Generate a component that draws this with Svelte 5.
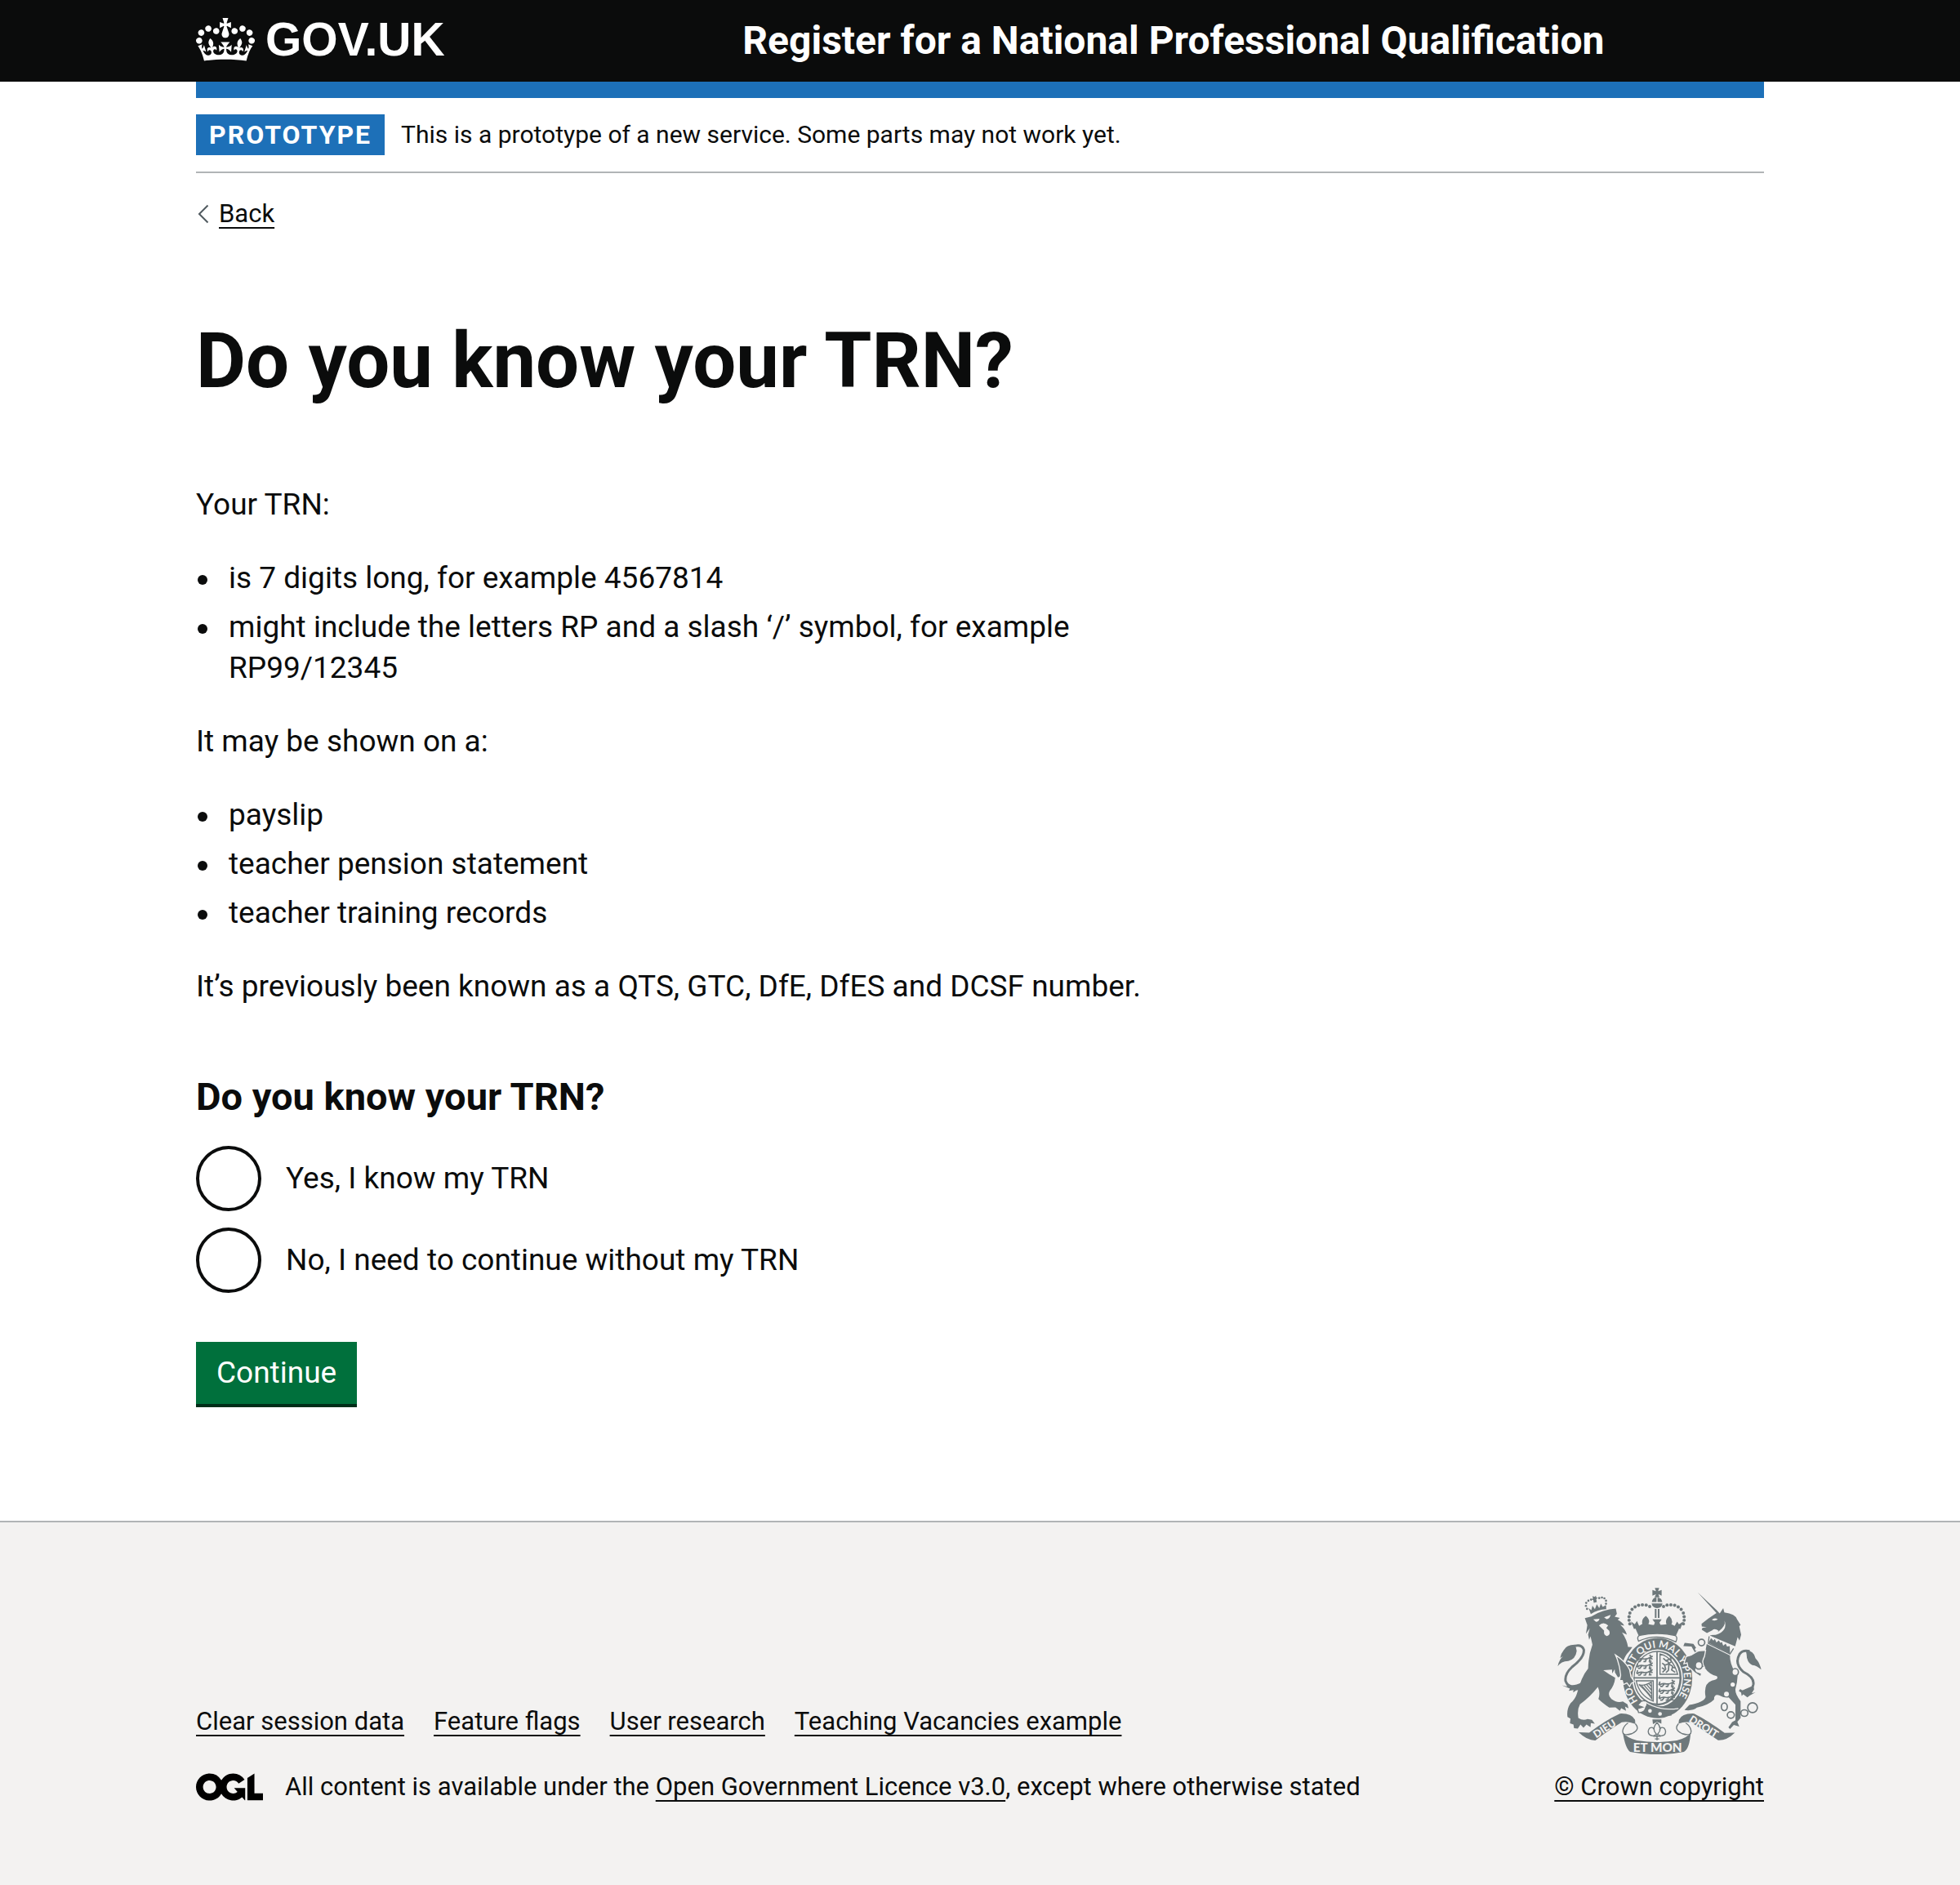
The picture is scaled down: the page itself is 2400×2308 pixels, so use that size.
<script>
  const trnFormats = [
    'is 7 digits long, for example 4567814',
    'might include the letters RP and a slash ‘/’ symbol, for example RP99/12345'
  ];
  const trnSources = ['payslip', 'teacher pension statement', 'teacher training records'];
  const choices = [
    { value: 'yes', label: 'Yes, I know my TRN' },
    { value: 'no', label: 'No, I need to continue without my TRN' }
  ];
  const footerLinks = ['Clear session data', 'Feature flags', 'User research', 'Teaching Vacancies example'];

  let answer = $state('');

  // Pearls along the arches of the imperial crown above the garter
  const pearls = [
    [338, 203], [335, 190], [335, 177], [338, 163], [346, 150], [357, 141], [370, 135], [384, 133], [398, 134], [411, 139],
    [462, 139], [475, 134], [489, 133], [503, 135], [516, 141], [527, 150], [535, 163], [538, 177], [538, 190], [535, 203]
  ];
  const lionPearls = [
    [180, 148], [176, 137], [177, 126], [185, 118], [195, 114], [225, 108], [235, 106], [244, 109], [250, 118], [250, 129]
  ];
  // Tops of the three lions passant in each English quarter
  const lionRows = [322, 347, 372];
</script>

<header class="header">
  <div class="container header-row">
    <a class="logo" href="#home">
      <svg class="crown" viewBox="0 0 132 97" aria-hidden="true">
        <path d="M25 30.2c3.5 1.5 7.7-.2 9.1-3.7 1.5-3.6-.2-7.8-3.9-9.2-3.6-1.4-7.6.3-9.1 3.9-1.4 3.5.3 7.5 3.9 9zM9 39.5c3.6 1.5 7.8-.2 9.2-3.7 1.5-3.6-.2-7.8-3.9-9.1-3.6-1.5-7.6.2-9.1 3.8-1.4 3.5.3 7.5 3.8 9zM4.4 57.2c3.5 1.5 7.7-.2 9.1-3.8 1.5-3.6-.2-7.7-3.9-9.1-3.5-1.5-7.6.3-9.1 3.8-1.4 3.5.3 7.6 3.9 9.1zm38.3-21.4c3.5 1.5 7.7-.2 9.1-3.8 1.5-3.6-.2-7.7-3.9-9.1-3.6-1.5-7.6.3-9.1 3.8-1.3 3.6.4 7.7 3.9 9.1zm64.4-5.6c-3.6 1.5-7.8-.2-9.1-3.7-1.5-3.6.2-7.8 3.8-9.2 3.6-1.4 7.7.3 9.2 3.9 1.3 3.5-.4 7.5-3.9 9zm15.9 9.3c-3.6 1.5-7.7-.2-9.1-3.7-1.5-3.6.2-7.8 3.7-9.1 3.6-1.5 7.7.2 9.2 3.8 1.5 3.5-.3 7.5-3.8 9zm4.7 17.7c-3.6 1.5-7.8-.2-9.2-3.8-1.5-3.6.2-7.7 3.9-9.1 3.6-1.5 7.7.3 9.2 3.8 1.3 3.5-.4 7.6-3.9 9.1zM89.3 35.8c-3.6 1.5-7.8-.2-9.2-3.8-1.4-3.6.2-7.7 3.9-9.1 3.6-1.5 7.7.3 9.2 3.8 1.4 3.6-.3 7.7-3.9 9.1zM69.7 17.7l8.9 4.7V9.3l-8.9 2.8c-.2-.3-.5-.6-.9-.9L72.4 0H59.6l3.5 11.2c-.3.3-.6.5-.9.9l-8.8-2.8v13.1l8.8-4.7c.3.3.6.7.9.9l-5 15.4v.1c-.2.8-.4 1.6-.4 2.4 0 4.1 3.1 7.5 7 8.1h.2c.3 0 .7.1 1 .1.4 0 .7 0 1-.1h.2c4-.6 7.1-4.1 7.1-8.1 0-.8-.1-1.7-.4-2.4V34l-5.1-15.4c.4-.2.7-.6 1-.9zM66 92.8c16.9 0 32.8 1.1 47.1 3.2 4-16.9 8.9-26.7 14-33.5l-9.6-3.4c1 4.9 1.1 7.2 0 10.2-1.5-1.4-3-4.3-4.2-8.7L108.6 76c2.8-2 5-3.2 7.5-3.3-4.4 9.4-10 11.9-13.6 11.2-4.3-.8-6.3-4.6-5.6-7.9 1-4.7 5.7-5.9 8-.5 4.3-8.7-3-11.4-7.6-8.8 7.1-7.2 7.9-13.5 2.1-21.1-8 6.1-8.1 12.3-4.5 20.8-4.7-5.4-12.1-2.5-9.5 6.2 3.4-5.2 7.9-2 7.2 3.1-.6 4.3-6.4 7.8-13.5 7.2-10.3-.9-10.9-8-11.2-13.8 2.5-.5 7.1 1.8 11 7.3L80.2 60c-4.1 4.4-8 5.3-12.3 5.4 1.4-4.4 8-11.6 8-11.6H55.5s6.4 7.2 7.9 11.6c-4.2-.1-8-1-12.3-5.4l1.4 16.4c3.9-5.5 8.5-7.7 10.9-7.3-.3 5.8-.9 12.8-11.1 13.8-7.2.6-12.9-2.9-13.5-7.2-.7-5 3.8-8.3 7.1-3.1 2.7-8.7-4.6-11.6-9.4-6.2 3.7-8.5 3.6-14.7-4.6-20.8-5.8 7.6-5 13.9 2.2 21.1-4.7-2.6-11.9.1-7.7 8.8 2.3-5.5 7.1-4.2 8.1.5.7 3.3-1.3 7.1-5.7 7.9-3.5.7-9-1.8-13.5-11.2 2.5.1 4.7 1.3 7.5 3.3l-4.7-15.4c-1.2 4.4-2.7 7.2-4.3 8.7-1.1-3-.9-5.3 0-10.2l-9.5 3.4c5 6.9 9.9 16.7 14 33.5 14.8-2.1 30.8-3.2 47.7-3.2z" />
      </svg>
      <span>GOV.UK</span>
    </a>
    <a class="service" href="#service">Register for a National Professional Qualification</a>
  </div>
</header>

<div class="container content">
  <div class="phase">
    <strong class="tag">PROTOTYPE</strong>
    <span>This is a prototype of a new service. Some parts may not work yet.</span>
  </div>

  <a class="back" href="#back">
    <svg viewBox="0 0 14 24" aria-hidden="true"><path d="M12.500 1.500 2 12l10.500 10.500" /></svg>
    <span>Back</span>
  </a>

  <main>
    <h1>Do you know your TRN?</h1>

    <p>Your TRN:</p>
    <ul class="bullets">
      {#each trnFormats as item}
        <li>{item}</li>
      {/each}
    </ul>

    <p>It may be shown on a:</p>
    <ul class="bullets">
      {#each trnSources as item}
        <li>{item}</li>
      {/each}
    </ul>

    <p>It’s previously been known as a QTS, GTC, DfE, DfES and DCSF number.</p>

    <form onsubmit={(event) => event.preventDefault()}>
      <fieldset>
        <legend>Do you know your TRN?</legend>
        <div class="radios">
          {#each choices as choice}
            <div class="radio">
              <input type="radio" id={choice.value} name="know-trn" value={choice.value} bind:group={answer} />
              <label for={choice.value}>{choice.label}</label>
            </div>
          {/each}
        </div>
      </fieldset>
      <button type="submit">Continue</button>
    </form>
  </main>
</div>

<footer>
  <div class="container footer-row">
    <div class="footer-main">
      <ul class="footer-links">
        {#each footerLinks as link}
          <li><a href="#footer">{link}</a></li>
        {/each}
      </ul>
      <div class="licence">
        <svg class="ogl" viewBox="0 0 483.200 195.700" aria-hidden="true">
          <path d="M421.5 142.8V.1l-50.7 32.3v161.1h112.4v-50.7zm-122.3-9.6A47.12 47.12 0 0 1 221 97.8c0-26 21.1-47.1 47.1-47.1 16.7 0 31.4 8.7 39.7 21.8l42.7-27.2A97.63 97.63 0 0 0 268.1 0c-36.5 0-68.3 20.1-85.1 49.7A98 98 0 0 0 97.8 0C43.9 0 0 43.9 0 97.8s43.9 97.8 97.8 97.8c36.5 0 68.3-20.1 85.1-49.7a97.76 97.76 0 0 0 149.6 25.4l19.4 22.2h3v-87.8h-80l24.3 27.5zM97.8 145c-26 0-47.1-21.1-47.1-47.1s21.1-47.1 47.1-47.1 47.1 21.1 47.1 47.1S123.8 145 97.8 145" />
        </svg>
        <span>All content is available under the <a href="#licence">Open Government Licence v3.0</a>, except where otherwise stated</span>
      </div>
    </div>

    <a class="copyright" href="#copyright">
      <svg class="crest" viewBox="72 70 750 614" aria-hidden="true">
        <!-- lion -->
        <path d="M172 182 196 176 Q238 150 286 147 L290 166 282 177 301 181 293 188 Q310 196 317 210 L303 207 Q322 224 327 243 L309 235 Q327 262 331 288 L347 289 334 306 Q321 318 313 342 L285 318 Q312 354 330 374 L305 396 294 400 283 382 282 370 273 386 272 372 240 374 Q262 390 284 402 Q281 430 264 450 Q255 466 270 480 Q290 496 312 489 L329 500 333 515 320 508 324 524 306 514 301 524 285 511 262 512 Q236 494 222 480 Q230 458 220 436 Q190 474 154 500 Q143 520 148 550 Q165 562 182 554 L198 557 209 571 194 569 193 584 178 574 167 586 156 574 146 589 132 588 130 574 117 570 119 552 108 546 Q104 519 119 496 Q136 482 143 460 Q159 398 184 368 Q185 320 200 280 L193 249 188 262 184 243 190 220 176 240 181 208 Z" />
        <path class="paper" d="M203 187 226 184 Q224 194 213 196ZM243 179 267 170 Q264 184 252 186ZM224 209 Q240 193 258 209 L251 218 262 229 Q268 245 253 248 Q240 245 243 228Z" />
        <path d="M194 167 186 145 196 153 200 136 209 149 216 131 225 145 231 129 238 141 250 134 251 149 Q219 150 194 167Z" />
        <path d="M200 101 208 104 213 99 214 106 220 106 214 112 216 123 205 126 203 115 197 114 202 109Z" />
        {#each lionPearls as [x, y]}
          <circle cx={x} cy={y} r="4" />
        {/each}
        <path class="tail" d="M161 424 Q113 447 101 414 Q97 388 125 362 Q172 326 168 298 Q161 279 137 284" />
        <path d="M137 280 Q105 279 94 300 Q84 312 81 329 L91 323 Q75 339 72 360 Q84 341 111 340 Q138 333 142 303ZM87 430 107 434 103 426 Q130 440 157 430 L151 446 Q140 446 129 456 L130 447 113 450 117 442Z" />

        <!-- garter and shield -->
        <ellipse cx="440" cy="403" rx="128" ry="148" />
        <ellipse class="ring" cx="440" cy="403" rx="91" ry="103" />
        <path id="garter" class="guide" d="M368 488 A97 112 0 0 1 343 403 A97 112 0 0 1 537 403 A97 112 0 0 1 440 515" />
        <text class="motto"><textPath href="#garter">HO<tspan dx="30">SOIT QUI MAL Y PENSE</tspan></textPath></text>
        <ellipse class="paper" cx="438" cy="402" rx="83" ry="95" />
        <path class="cross" d="M438 305V500M351 402H525" />
        {#each [0, 1] as quarter}
          <g transform={quarter ? 'translate(82 92)' : undefined}>
            {#each lionRows as y}
              <path class="beast" transform="translate(0 {y})" d="M362 14q5-6 4-12m-2 14q10-9 22-6t23-3l13-7m-9 4 8 8m-8-5-3 12h8m-18-11-5 12h-7m-5-10-8 10h-7m48-20-6-4" />
            {/each}
          </g>
        {/each}
        <path class="thin" d="M449 314 Q496 325 514 389 L449 389ZM361 413 424 413 424 488 Q374 470 361 413Z" />
        <path class="beast" d="M458 382 470 370 466 356 482 350 475 337 488 332 491 343 480 350 496 360 492 373 505 382M468 356 457 348M474 342 461 330M456 365 465 370M482 352 480 374 471 383M494 362 506 366M486 323 491 331" />
        <path class="thin" d="M371 427 Q388 434 417 418 L419 480 Q402 454 371 427M382 432 416 470M391 430 417 460M400 427 417 447M408 424 418 435" />
        <path class="strap" d="M388 500 Q430 530 490 524" />
        <circle class="paper" cx="412" cy="524" r="7" />
        <circle class="paper" cx="449" cy="535" r="7" />
        <path class="buckle" d="M372 497 Q381 483 395 488 Q407 496 397 510 Q392 532 370 530 L366 516 385 510 367 504Z" />
        <path class="paper-line" d="M393 490 Q446 526 517 515" />
        <!-- lion's raised arm -->
        <path class="arm" d="M285 318 Q322 342 337 372 L342 398 354 416 343 423 337 434 327 421 314 427 310 412 300 412 304 392 Q300 350 285 318Z" />

        <!-- imperial crown -->
        <path d="M359 221 Q382 207 437 207 Q492 207 519 221 L507 248 Q438 231 371 248Z" />
        <path d="M342 194 356 205 364 193 372 211 384 203 Q379 187 397 174 Q415 190 406 204 L426 209 430 199 421 187H455L447 199 451 208 473 205 Q466 188 483 174 Q499 190 491 205 L503 211 512 195 519 205 534 195 524 222 Q438 203 353 222Z" />
        {#each pearls as [x, y]}
          <circle cx={x} cy={y} r="6" />
        {/each}
        <path d="M418 128H458Q456 145 438 145Q421 144 418 128ZM430 148H436V181H430ZM441 148H447V181H441ZM419 124Q421 105 437 106Q456 106 457 124ZM430 71H446L442 83 455 78V99L443 94 447 105H429L434 94 421 99V78L434 83Z" />
        <path class="paper-line" d="M438 106V123M419 125H457" />
        <path class="cap" d="M370 267 Q362 251 374 246 Q438 232 505 246 Q516 252 507 270 Q440 235 370 267Z" />

        <!-- unicorn -->
        <path d="M588 87 658 153 669 165 682 145 686 161 Q727 166 733 187 L746 207 741 212 748 243 742 265 735 252 726 286 632 246 Q657 244 665 229 Q651 218 641 227 L622 237 603 225 605 218 621 215 603 213 602 203 626 184 657 163Z" />
        <path class="paper" d="M640 188 Q651 178 662 187 Q650 194 640 188ZM665 231 Q692 211 687 191 Q700 229 654 244 L641 244Z" />
        <path class="paper" d="M629 244 Q676 275 725 291 L708 321 622 279Z" />
        <path class="thin" d="M630 249 627 275 707 314 720 294" />
        <path d="M628 273 637 256 646 265 651 259 657 272 666 264 671 273 677 270 682 284 691 276 696 287 706 285 707 314Z" />
        <path d="M621 278 707 320 Q706 357 735 394 Q734 420 727 443 Q725 462 746 488 L746 550 734 564 741 582 721 576 707 591 701 585 715 565 727 558 727 501 702 474 Q687 477 669 467 Q648 460 648 482 Q630 501 585 512 Q570 525 539 521 L557 502 Q611 492 617 473 Q608 423 640 412 Q668 408 658 396 Q630 389 613 364 L587 364 Q576 370 584 379 L602 386 599 398 579 385 563 370 566 340 600 339 613 323 588 319 578 309 565 287 535 285 540 273 572 277 589 302 617 301Z" />
        <path class="arm" d="M617 301 Q588 300 579 309 Q565 320 545 324 L537 350 549 347 552 362 563 370 579 385 599 398 602 386 584 379 Q576 370 587 364 L613 364 Q600 345 613 323Z" />
        <path class="tail" d="M742 447 Q783 476 793 426 Q797 400 756 380 Q722 350 742 315 Q753 298 779 304" />
        <path d="M765 300 Q795 301 801 330 Q816 345 822 372 Q807 357 789 355 Q768 345 768 315ZM792 431 796 444 787 459 801 455 780 467 771 474 756 463 750 469 747 451Z" />
        <g class="chain">
          <ellipse cx="602" cy="272" rx="12" ry="12" />
          <ellipse cx="592" cy="356" rx="13" ry="14" />
          <ellipse cx="726" cy="381" rx="12" ry="13" />
          <ellipse cx="686" cy="509" rx="11" ry="14" />
          <ellipse cx="710" cy="539" rx="13" ry="12" />
          <ellipse cx="760" cy="532" rx="13" ry="12" />
          <circle cx="790" cy="512" r="18" />
        </g>
        <circle class="paper" cx="717" cy="427" r="8" />
        <circle class="paper" cx="694" cy="462" r="9" />
        <circle class="paper" cx="584" cy="297" r="6" />

        <!-- ribbon -->
        <path d="M149 603 188 604 Q250 557 301 534 Q344 532 357 557 L358 572 Q329 560 308 566 Q252 600 211 633 Q181 634 149 603ZM725 604 687 605 Q625 559 575 534 Q530 532 519 557 L517 571 Q546 561 568 569 Q621 604 663 632 Q694 634 725 604Z" />
        <path class="ribbon-fold" d="M358 571 Q378 592 345 608 Q307 619 312 595 Q316 578 331 569M517 571 Q498 592 531 608 Q568 619 563 595 Q559 578 544 569" />
        <path d="M312 604 Q326 622 364 633 Q438 645 511 633 Q551 622 562 604 Q558 663 537 675 Q438 694 339 675 Q321 661 312 604Z" />
        <text class="word" transform="translate(214 625) rotate(-33)">DIEU</text>
        <text class="word large" x="350" y="674">ET MON</text>
        <text class="word" transform="translate(553 562) rotate(32)">DROIT</text>
        <!-- fleur-de-lis pendant -->
        <path d="M421 555H454V571L438 564 423 573Z" />
        <path class="thin" d="M438 567 Q417 590 435 609 Q427 620 412 613 Q400 602 410 588 Q424 580 428 595M438 567 Q459 590 441 609 Q449 620 464 613 Q475 602 465 588 Q451 580 447 595M424 617H452M438 609V632M430 627H446" />
      </svg>
      <span>© Crown copyright</span>
    </a>
  </div>
</footer>

<style>
  :global(body) {
    margin: 0;
    background: #ffffff;
  }

  :global(#app) {
    font-family: Roboto, "Open Sans", sans-serif;
    font-size: 37px;
    line-height: 50px;
    color: #0b0c0c;
  }

  .container {
    max-width: 1920px;
    width: calc(100% - 60px);
    margin: 0 auto;
  }

  a {
    color: inherit;
    text-decoration-thickness: 2px;
    text-underline-offset: 6px;
    text-decoration-skip-ink: none;
  }

  ul,
  fieldset,
  legend,
  p {
    margin: 0;
    padding: 0;
    border: 0;
  }

  .header {
    background: #0b0c0c;
    color: #ffffff;
  }

  .header-row {
    display: grid;
    grid-template-columns: 1fr 2fr;
    align-items: center;
    gap: 44px;
    min-height: 100px;
  }

  .content {
    border-top: 20px solid #1d70b8;
  }

  .logo {
    display: flex;
    align-items: center;
    gap: 13px;
    padding-bottom: 4px;
    font: 700 57px/60px "Liberation Sans", Arial, sans-serif;
    text-decoration: none;
  }

  .crown {
    width: 72px;
    height: 53px;
    fill: currentColor;
  }

  .service {
    font-size: 48px;
    font-weight: 700;
    line-height: 60px;
    text-decoration: none;
  }

  .phase {
    display: flex;
    align-items: center;
    gap: 20px;
    padding: 20px 0;
    border-bottom: 2px solid #b1b4b6;
    font-size: 30px;
    line-height: 40px;
  }

  .tag {
    padding: 5px 16px;
    background: #1d70b8;
    color: #ffffff;
    font-size: 32px;
    letter-spacing: 2px;
  }

  .back {
    display: inline-flex;
    align-items: center;
    gap: 12px;
    margin-top: 30px;
    padding-left: 2px;
    font-size: 31px;
    line-height: 40px;
    text-decoration: none;
  }

  .back span {
    text-decoration: underline 2px;
    text-underline-offset: 6px;
  }

  .back svg {
    width: 14px;
    height: 24px;
    fill: none;
    stroke: #505a5f;
    stroke-width: 2;
  }

  main {
    max-width: 1260px;
    padding: 105px 0 143px;
  }

  h1 {
    margin: 0 0 101px;
    font-size: 94px;
    line-height: 100px;
  }

  p,
  .bullets {
    margin-bottom: 40px;
  }

  .bullets {
    display: flex;
    flex-direction: column;
    gap: 10px;
    padding-left: 2px;
    list-style: none;
  }

  .bullets li {
    display: grid;
    grid-template-columns: 12px 1fr;
    column-gap: 26px;
  }

  .bullets li::before {
    content: "";
    height: 12px;
    margin-top: 21px;
    border-radius: 50%;
    background: currentColor;
  }

  legend {
    margin-bottom: 30px;
    font-size: 47px;
    font-weight: 700;
    line-height: 60px;
  }

  form {
    margin-top: 80px;
  }

  .radios {
    display: flex;
    flex-direction: column;
    gap: 20px;
  }

  .radio {
    display: flex;
    align-items: center;
    gap: 30px;
  }

  input {
    appearance: none;
    flex: none;
    width: 80px;
    height: 80px;
    margin: 0;
    border: 4px solid #0b0c0c;
    border-radius: 50%;
    background: #ffffff;
  }

  input:checked {
    background: radial-gradient(#0b0c0c 20px, #ffffff 21px);
  }

  button {
    display: block;
    margin-top: 60px;
    padding: 13px 25px;
    border: 0;
    background: #00703c;
    box-shadow: 0 4px 0 #002d18;
    color: #ffffff;
    font: inherit;
    cursor: pointer;
  }

  footer {
    padding: 80px 0 100px;
    border-top: 2px solid #b1b4b6;
    background: #f3f2f1;
    font-size: 31px;
    line-height: 40px;
  }

  .footer-row {
    display: flex;
    align-items: flex-end;
    justify-content: space-between;
    gap: 60px;
  }

  .footer-links {
    display: flex;
    flex-wrap: wrap;
    gap: 20px 36px;
    margin-bottom: 40px;
    list-style: none;
  }

  .licence {
    display: flex;
    align-items: center;
    gap: 27px;
  }

  .ogl {
    flex: none;
    width: 82px;
    height: 34px;
  }

  .copyright {
    display: flex;
    flex-direction: column;
    align-items: center;
    gap: 20px;
  }

  .crest {
    width: 250px;
    height: 204px;
    fill: #6e787b;
  }

  .crest .paper {
    fill: #f3f2f1;
  }

  .crest .paper-line,
  .crest .ring,
  .crest .guide,
  .crest .cross,
  .crest .thin,
  .crest .beast,
  .crest .tail,
  .crest .strap,
  .crest .ribbon-fold {
    fill: none;
  }

  .crest .paper-line,
  .crest .arm {
    stroke: #f3f2f1;
    stroke-width: 4;
  }

  .crest .ring {
    stroke: #f3f2f1;
    stroke-width: 5;
  }

  .crest .cross,
  .crest .beast {
    stroke: #6e787b;
    stroke-width: 5;
  }

  .crest .thin,
  .crest .ribbon-fold {
    stroke: #6e787b;
    stroke-width: 4;
  }

  .crest .tail {
    stroke: #6e787b;
    stroke-width: 9;
  }

  .crest .chain {
    fill: #f3f2f1;
    stroke: #6e787b;
    stroke-width: 5;
  }

  .crest .strap {
    stroke: #6e787b;
    stroke-width: 34;
  }

  .crest .buckle,
  .crest .cap {
    fill: #f3f2f1;
    stroke: #6e787b;
    stroke-width: 4;
  }

  .crest .motto {
    fill: #f3f2f1;
    font: 700 37px Lato, sans-serif;
  }

  .crest .word {
    fill: #f3f2f1;
    font: 900 38px Lato, sans-serif;
  }

  .crest .large {
    font-size: 46px;
  }
</style>
